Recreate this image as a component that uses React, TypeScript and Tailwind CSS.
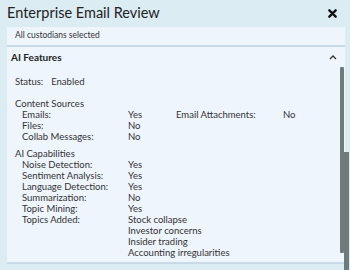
import React from 'react';

const contentSources = [
  { label: 'Emails:', value: 'Yes', extraLabel: 'Email Attachments:', extraValue: 'No' },
  { label: 'Files:', value: 'No' },
  { label: 'Collab Messages:', value: 'No' },
];

const capabilities = [
  { label: 'Noise Detection:', value: 'Yes' },
  { label: 'Sentiment Analysis:', value: 'Yes' },
  { label: 'Language Detection:', value: 'Yes' },
  { label: 'Summarization:', value: 'No' },
  { label: 'Topic Mining:', value: 'Yes' },
];

const topics = ['Stock collapse', 'Investor concerns', 'Insider trading', 'Accounting irregularities'];

export default function App() {
  return (
    <div className="relative w-[350px] h-[270px] overflow-hidden bg-[#dcecf3] font-['Lato',sans-serif] text-[#333]">
      <div className="flex items-center justify-between h-[27px] pl-[7px] pr-[13px]">
        <h1 className="text-[14.5px] leading-none text-[#222]">Enterprise Email Review</h1>
        <svg width="9" height="9" viewBox="0 0 10 10" className="text-[#111]">
          <path d="M1.5 1.5 L8.5 8.5 M8.5 1.5 L1.5 8.5" stroke="currentColor" strokeWidth="2.6" strokeLinecap="round" />
        </svg>
      </div>

      <div className="ml-[7px] mr-[5px] h-[237px] bg-[#eef5fd] border-b-2 border-[#c9d9e8] flex flex-col">
        <div className="h-[20px] pl-[8px] pt-[2px] text-[8.5px] border-b-2 border-[#c9d9e8]">
          All custodians selected
        </div>

        <div className="flex items-center justify-between h-[20px] pl-[4px] pr-[8px]">
          <span className="text-[10px] font-bold text-[#222]">AI Features</span>
          <svg width="8" height="5" viewBox="0 0 8 5">
            <path d="M1 4 L4 1 L7 4" fill="none" stroke="#333" strokeWidth="1.3" />
          </svg>
        </div>

        <div className="pl-[8px] pt-[9px] text-[9.5px] leading-[11px]">
          <div className="flex gap-[8px]">
            <span>Status:</span>
            <span>Enabled</span>
          </div>

          <div className="mt-[11px]">Content Sources</div>
          <div className="pl-[7px]">
            {contentSources.map((row) => (
              <div key={row.label} className="grid grid-cols-[106px_48px_107px_auto]">
                <span>{row.label}</span>
                <span>{row.value}</span>
                <span>{row.extraLabel}</span>
                <span>{row.extraValue}</span>
              </div>
            ))}
          </div>

          <div className="mt-[6px]">AI Capabilities</div>
          <div className="pl-[7px]">
            {capabilities.map((row) => (
              <div key={row.label} className="grid grid-cols-[106px_auto]">
                <span>{row.label}</span>
                <span>{row.value}</span>
              </div>
            ))}
            <div className="grid grid-cols-[106px_auto]">
              <span>Topics Added:</span>
              <div className="flex flex-col">
                {topics.map((t) => (
                  <span key={t}>{t}</span>
                ))}
              </div>
            </div>
          </div>
        </div>
      </div>

      {/* scrollbar thumbs */}
      <div className="absolute left-[340px] top-[67px] w-[4px] h-[186px] rounded-[1px] bg-[#6f7a7a]" />
      <div className="absolute left-[344px] top-[152px] w-[5px] h-[118px] bg-[#6f7a7a]" />
    </div>
  );
}
